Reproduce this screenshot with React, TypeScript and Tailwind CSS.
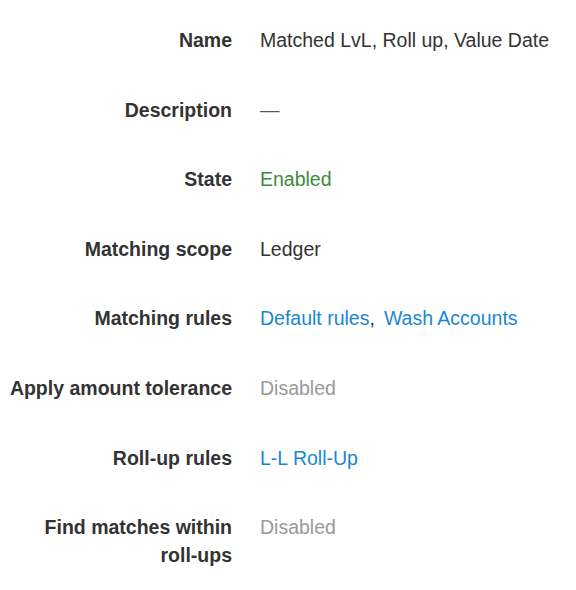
import React from "react";

type Row = { label: React.ReactNode; key: string; value: React.ReactNode };

const rows: Row[] = [
  { key: "name", label: "Name", value: <span className="text-[#333333]">Matched LvL, Roll up, Value Date</span> },
  { key: "desc", label: "Description", value: <span className="text-[#555555]">—</span> },
  { key: "state", label: "State", value: <span className="text-[#3b8a3e]">Enabled</span> },
  { key: "scope", label: "Matching scope", value: <span className="text-[#333333]">Ledger</span> },
  {
    key: "rules",
    label: "Matching rules",
    value: (
      <span>
        <a className="text-[#1a87cf]">Default rules</a>
        <span className="text-[#333333]">,</span>
        <a className="ml-[9px] text-[#1a87cf]">Wash Accounts</a>
      </span>
    ),
  },
  { key: "tol", label: "Apply amount tolerance", value: <span className="text-[#999999]">Disabled</span> },
  { key: "roll", label: "Roll-up rules", value: <a className="text-[#1a87cf]">L-L Roll-Up</a> },
  {
    key: "find",
    label: (
      <>
        Find matches within <span className="whitespace-nowrap">roll-ups</span>
      </>
    ),
    value: <span className="text-[#999999]">Disabled</span>,
  },
];

export default function App() {
  return (
    <div
      className="w-[576px] h-[590px] bg-white pt-[26px]"
      style={{ fontFamily: '"Liberation Sans", Arial, Helvetica, sans-serif' }}
    >
      <div className="flex flex-col gap-[41.6px] text-[19.5px] leading-[28px]">
        {rows.map((r) => (
          <div key={r.key} className="flex">
            <div className="w-[232px] shrink-0 pl-[8px] text-right font-bold text-[#333333]">{r.label}</div>
            <div className="pl-[28px]">{r.value}</div>
          </div>
        ))}
      </div>
    </div>
  );
}
